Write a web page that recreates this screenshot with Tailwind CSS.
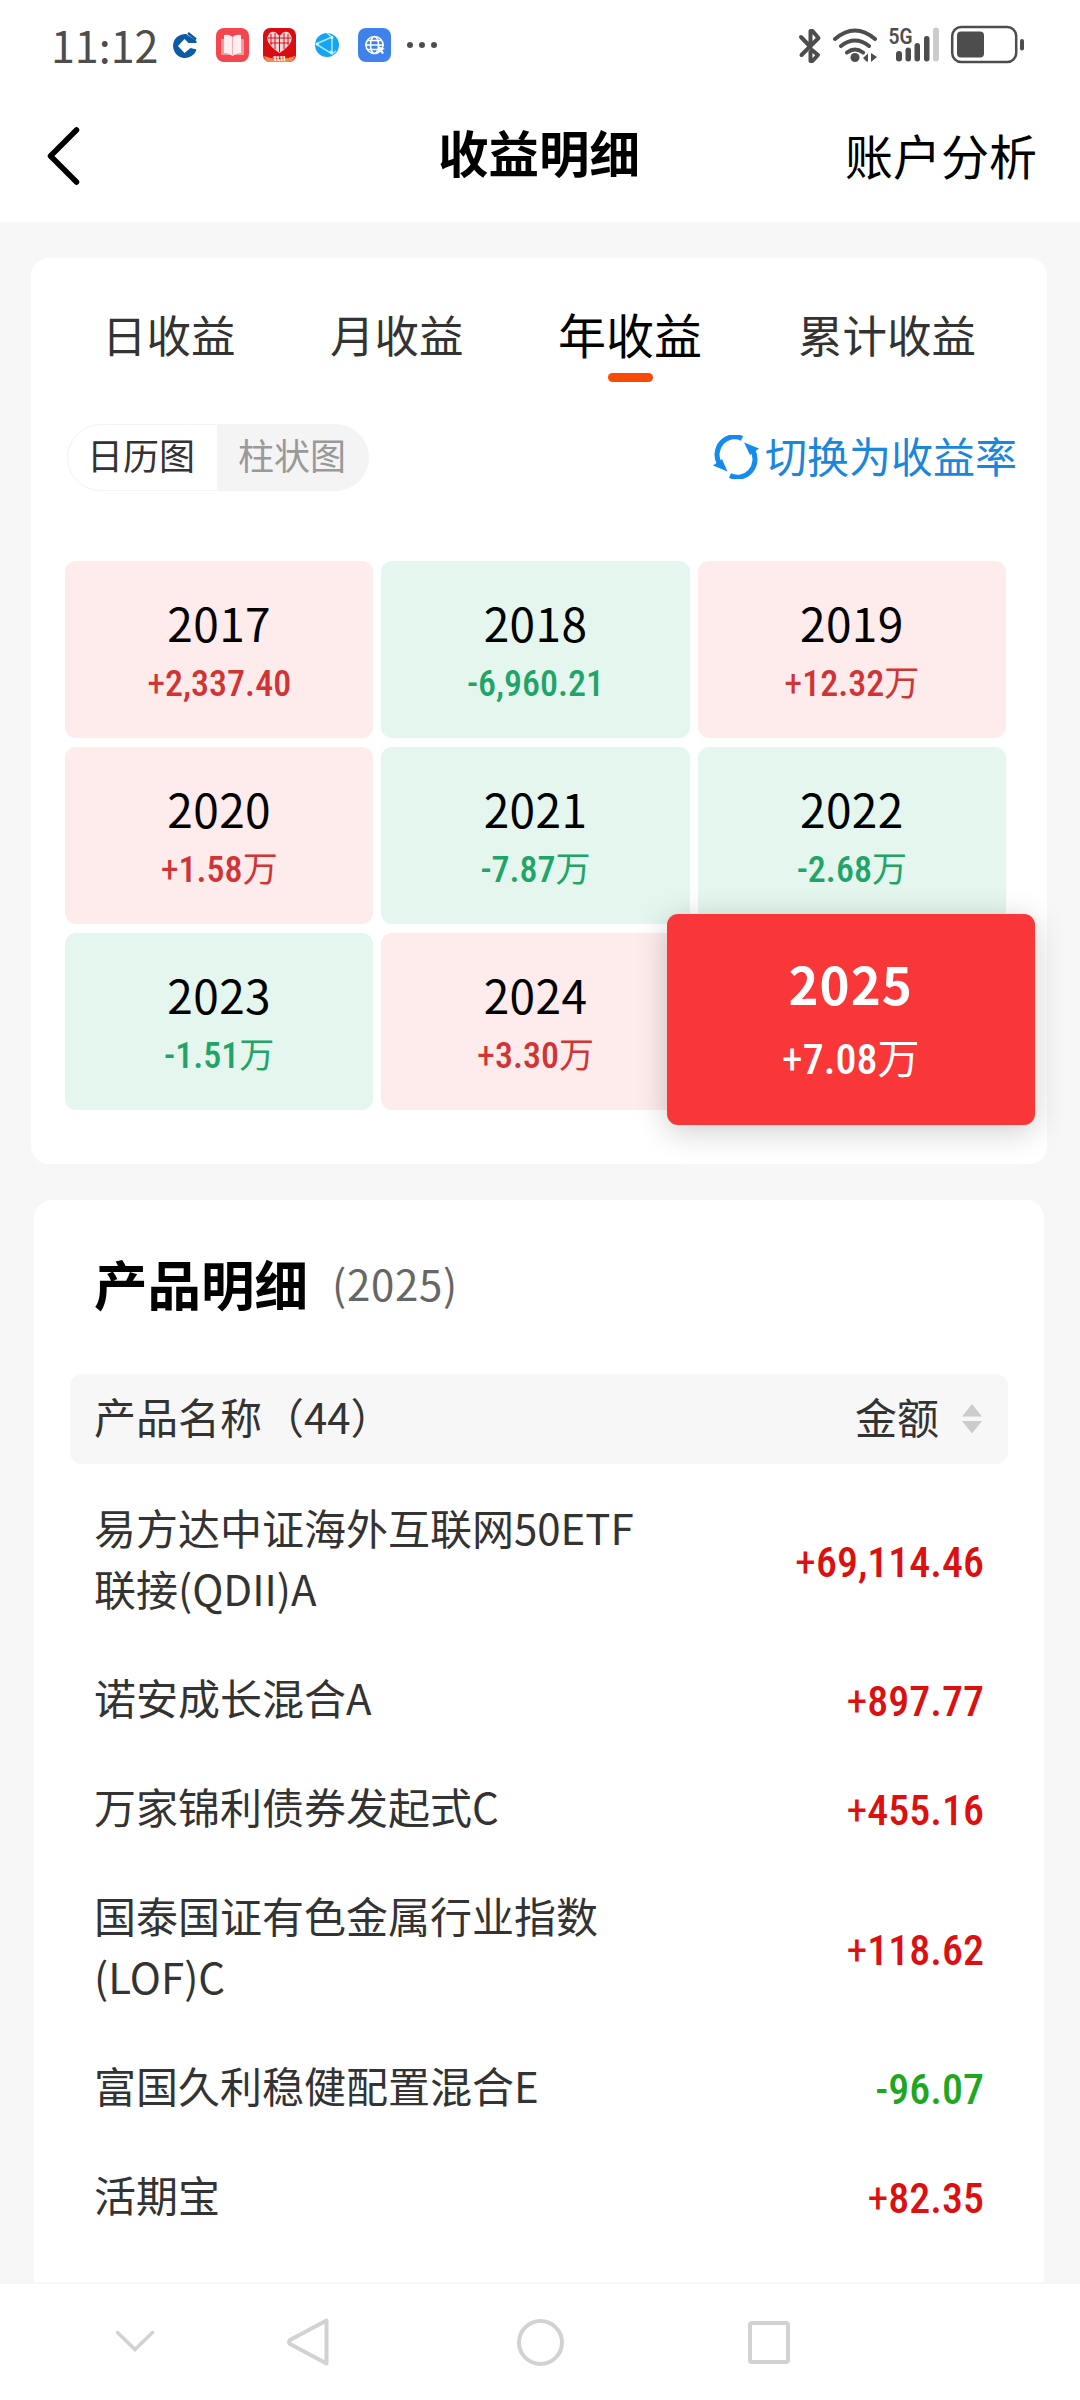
<!DOCTYPE html>
<html lang="zh-CN">
<head>
    <meta charset="UTF-8">
    <meta name="viewport" content="width=device-width, initial-scale=1.0">
    <title>收益明细</title>
    <script src="https://cdn.jsdelivr.net/npm/@tailwindcss/browser@4"></script>
</head>
<body class="bg-[#f7f7f7] w-[1080px] h-[2400px] overflow-hidden flex flex-col text-[#333] font-['Noto_Sans_CJK_SC',sans-serif]">
    <!-- status bar -->
    <div class="h-[90px] bg-white flex items-center justify-between pl-[51px] pr-[56px] text-[#4d4d4d] shrink-0">
        <div class="flex items-center">
            <span class="w-[122px] text-[43px] leading-[60px] whitespace-nowrap -mt-[3px]">11:12</span>
            <svg class="w-[24px] h-[26px]" viewBox="0 0 24 26">
                <path d="M13 2A12 12 0 1 0 23.500 17.500L17.500 16 11.500 21 5 14 11.500 7l4 4h8V9z" fill="#0b5ba5"/>
                <path d="M15 1 23 7.500" stroke="#0b5ba5" stroke-width="2.500"/>
            </svg>
            <svg class="w-[33px] h-[34px] ml-[19px]" viewBox="0 0 33 34">
                <rect width="33" height="34" rx="8" fill="#f5454f"/>
                <path d="M5 11h23v16H5z" fill="#fa9a9e"/>
                <path d="M8 7q5-1 8.500 2Q20 6 25 7v18q-5 0-8.500 3Q13 25 8 25z" fill="#fff0ef"/>
                <path d="M16.500 9v18" stroke="#f9b0b0" stroke-width="1"/>
            </svg>
            <svg class="w-[33px] h-[34px] ml-[14px]" viewBox="0 0 33 34">
                <rect width="33" height="34" rx="7" fill="#d80d14"/>
                <path d="M1 28q15 6 31 0-1 6-7 6H8q-6 0-7-6z" fill="#f58a4c"/>
                <path d="M16.500 25Q3 16 4.500 9 7 2 13 4.500L16.500 8 20 4.500Q26 2 28.500 9 30 16 16.500 25z" fill="#f7d3d3"/>
                <path d="M8 6v11M12 5v16M16.500 8v16M21 5v16M25 6v11M5 10h23M7 15h19" stroke="#d80d14" stroke-width="1"/>
                <text x="16.500" y="32.500" text-anchor="middle" font-family="Roboto" font-size="8" font-weight="900" textLength="14" fill="#fff">11.11</text>
            </svg>
            <svg class="w-[24px] h-[24px] ml-[19px]" viewBox="0 0 24 24">
                <circle cx="12" cy="12" r="12" fill="#17a4f5"/>
                <path d="M1 11 17 4v17zM17 4l-5-4M17 21l4-3" fill="none" stroke="#a6ecff" stroke-width="1.500"/>
                <circle cx="17" cy="4.500" r="1.500" fill="#d6f6ff"/><circle cx="2.500" cy="11" r="1.500" fill="#d6f6ff"/><circle cx="16" cy="19" r="1.500" fill="#d6f6ff"/>
            </svg>
            <svg class="w-[33px] h-[34px] ml-[19px]" viewBox="0 0 33 34">
                <rect width="33" height="34" rx="8" fill="#3f82ec"/>
                <g fill="none" stroke="#fff" stroke-width="1.600">
                    <circle cx="16.500" cy="17" r="8.500"/><ellipse cx="16.500" cy="17" rx="4" ry="8.500"/>
                    <path d="M7 17h19M9 12.500h15M9 21.500h12"/>
                </g>
                <path d="m20 18 7 3-3 1 2 3-2 1-2-3-2 2z" fill="#fff"/>
            </svg>
            <span class="ml-[16px] flex gap-[6px]">
                <i class="size-[6px] rounded-full bg-[#4d4d4d]"></i>
                <i class="size-[6px] rounded-full bg-[#4d4d4d]"></i>
                <i class="size-[6px] rounded-full bg-[#4d4d4d]"></i>
            </span>
        </div>
        <!-- bluetooth, wifi, signal, battery -->
        <svg class="w-[226px] h-[40px]" viewBox="798 25 226 40">
            <g fill="none" stroke="#4d4d4d" stroke-width="4" stroke-linecap="round" stroke-linejoin="round">
                <path d="m801 37 9.500 10V31h2l6 7-17 17M812 50l6 5-5.500 6h-2v-9"/>
                <path d="M835 39q20-17 40 0M841 46q14-11 28 0M847 52.500q8-6 16 0"/>
            </g>
            <circle cx="855" cy="57.500" r="4.500" fill="#4d4d4d"/>
            <path d="M863 58l5-4.500v8h-1.500zM871 53v9l6-5z" fill="#4d4d4d"/>
            <text x="888.500" y="43.500" font-family="Roboto" font-size="21.500" font-weight="600" textLength="24" lengthAdjust="spacingAndGlyphs" fill="#4d4d4d">5G</text>
            <g fill="#4d4d4d">
                <rect x="896" y="51" width="6" height="10.500" rx="3"/>
                <rect x="905.500" y="47.500" width="5.500" height="14" rx="2.700"/>
                <rect x="914.500" y="43" width="5.500" height="18.500" rx="2.700"/>
                <rect x="924" y="36" width="5.500" height="25.500" rx="2.700"/>
                <rect x="933" y="27.500" width="6" height="34" rx="3" fill="#cbcbcb"/>
                <rect x="957" y="31.500" width="27" height="26" rx="4"/>
                <rect x="1020" y="39" width="4" height="11.500" rx="2"/>
            </g>
            <rect x="952.200" y="27" width="64" height="35" rx="9" fill="none" stroke="#4d4d4d" stroke-width="2.500"/>
        </svg>
    </div>

    <!-- title bar -->
    <header class="h-[132px] bg-white grid grid-cols-3 items-center pl-[45px] pr-[43px] text-black shrink-0">
        <svg class="w-[38px] h-[60px]" viewBox="0 0 38 60"><path d="M31.500 4 5.500 30 31.500 56" fill="none" stroke="#000" stroke-width="5.500" stroke-linecap="round" stroke-linejoin="round"/></svg>
        <h1 class="text-[50.5px] leading-[60px] font-bold text-center -mt-[10px] -ml-[4px]">收益明细</h1>
        <a class="text-[48px] leading-[60px] text-right -mt-[5px]">账户分析</a>
    </header>

    <!-- yearly calendar -->
    <section class="mt-[36px] ml-[31px] mr-[33px] h-[906px] bg-white rounded-[18px] shrink-0">
        <nav class="flex pt-[44px] pl-[71px] text-[44.5px] leading-[64px] whitespace-nowrap">
            <a class="w-[228px]">日收益</a>
            <a class="w-[228px]">月收益</a>
            <a class="w-[144px] text-[48px] text-black flex flex-col items-center"><span class="-mt-[1px] mb-[1px]">年收益</span><i class="w-[45px] h-[9px] mt-[7px] rounded-full bg-[#fa4a08]"></i></a>
            <a class="ml-[96px]">累计收益</a>
        </nav>
        <div class="mt-[42px] ml-[36px] mr-[30px] flex justify-between items-center">
            <div class="flex w-[302px] h-[67px] rounded-full bg-[#f4f4f4] border border-[#f4f4f4] overflow-hidden text-[36px] leading-[59px]">
                <span class="w-[149px] bg-white text-center rounded-l-full -indent-[3px] pb-[6px]">日历图</span>
                <span class="w-[151px] pl-[21px] text-[#999]">柱状图</span>
            </div>
            <a class="flex items-center text-[42px] leading-[60px] text-[#1a86dc] -mt-[6px]">
                <svg class="w-[46px] h-[44px] mr-[6px] mt-[4px]" viewBox="0 0 46 44">
                    <path d="M29 3.500A17.500 18 0 0 0 6.500 29M17 40.500A17.500 18 0 0 0 39.500 15" fill="none" stroke="#148bee" stroke-width="5"/>
                    <path d="M31 7.500 46 13.500 37 20zM0 30.500 9 24 14.500 36.500z" fill="#148bee"/>
                </svg>
                切换为收益率
            </a>
        </div>
        <div class="mt-[70px] ml-[34px] w-[941px] grid grid-cols-3 gap-x-[8px] gap-y-[9px] text-center">
            <div class="h-[177px] rounded-[11px] pt-[31px] bg-[#feebeb] text-[#d03434]">
                <p class="text-[46px] leading-[60px] tracking-[0.4px] text-black">2017</p>
                <p class="text-[36px] leading-[64px] font-['Roboto_Condensed','Noto_Sans_CJK_SC',sans-serif] font-medium"><span class="font-normal">+</span>2,337.40</p>
            </div>
            <div class="h-[177px] rounded-[11px] pt-[31px] bg-[#e5f6ee] text-[#1ea567]">
                <p class="text-[46px] leading-[60px] tracking-[0.4px] text-black">2018</p>
                <p class="text-[36px] leading-[64px] font-['Roboto_Condensed','Noto_Sans_CJK_SC',sans-serif] font-medium">-6,960.21</p>
            </div>
            <div class="h-[177px] rounded-[11px] pt-[31px] bg-[#feebeb] text-[#d03434]">
                <p class="text-[46px] leading-[60px] tracking-[0.4px] text-black">2019</p>
                <p class="text-[36px] leading-[64px] font-['Roboto_Condensed','Noto_Sans_CJK_SC',sans-serif] font-medium"><span class="font-normal">+</span>12.32<span class="font-normal text-[35px]">万</span></p>
            </div>
            <div class="h-[177px] rounded-[11px] pt-[31px] bg-[#feebeb] text-[#d03434]">
                <p class="text-[46px] leading-[60px] tracking-[0.4px] text-black">2020</p>
                <p class="text-[36px] leading-[64px] font-['Roboto_Condensed','Noto_Sans_CJK_SC',sans-serif] font-medium"><span class="font-normal">+</span>1.58<span class="font-normal text-[35px]">万</span></p>
            </div>
            <div class="h-[177px] rounded-[11px] pt-[31px] bg-[#e5f6ee] text-[#1ea567]">
                <p class="text-[46px] leading-[60px] tracking-[0.4px] text-black">2021</p>
                <p class="text-[36px] leading-[64px] font-['Roboto_Condensed','Noto_Sans_CJK_SC',sans-serif] font-medium">-7.87<span class="font-normal text-[35px]">万</span></p>
            </div>
            <div class="h-[177px] rounded-[11px] pt-[31px] bg-[#e5f6ee] text-[#1ea567]">
                <p class="text-[46px] leading-[60px] tracking-[0.4px] text-black">2022</p>
                <p class="text-[36px] leading-[64px] font-['Roboto_Condensed','Noto_Sans_CJK_SC',sans-serif] font-medium">-2.68<span class="font-normal text-[35px]">万</span></p>
            </div>
            <div class="h-[177px] rounded-[11px] pt-[31px] bg-[#e5f6ee] text-[#1ea567]">
                <p class="text-[46px] leading-[60px] tracking-[0.4px] text-black">2023</p>
                <p class="text-[36px] leading-[64px] font-['Roboto_Condensed','Noto_Sans_CJK_SC',sans-serif] font-medium">-1.51<span class="font-normal text-[35px]">万</span></p>
            </div>
            <div class="h-[177px] rounded-[11px] pt-[31px] bg-[#feebeb] text-[#d03434]">
                <p class="text-[46px] leading-[60px] tracking-[0.4px] text-black">2024</p>
                <p class="text-[36px] leading-[64px] font-['Roboto_Condensed','Noto_Sans_CJK_SC',sans-serif] font-medium"><span class="font-normal">+</span>3.30<span class="font-normal text-[35px]">万</span></p>
            </div>
            <!-- selected year, enlarged over its neighbours -->
            <div class="h-[177px] relative">
                <div class="absolute -left-[31px] -top-[19px] w-[368px] h-[211px] rounded-[11px] bg-[#f93739] text-white shadow-[0_6px_32px_rgba(0,0,0,0.2)] pt-[36px]">
                    <p class="text-[51px] leading-[66px] tracking-[1px] font-bold">2025</p>
                    <p class="text-[42px] leading-[88px] font-['Roboto_Condensed','Noto_Sans_CJK_SC',sans-serif] font-medium"><span class="font-normal">+</span>7.08<span class="font-normal">万</span></p>
                </div>
            </div>
        </div>
    </section>

    <!-- product list -->
    <section class="mt-[36px] ml-[34px] mr-[36px] mb-[2px] h-[1082px] px-[36px] bg-white rounded-t-[18px] shrink-0">
        <h2 class="h-[174px] pt-[41px] pl-[24px] flex text-[53.5px] leading-[84px] font-bold text-black">产品明细<span class="ml-[24px] text-[42px] font-normal text-[#666] tracking-[0.7px]">(2025)</span></h2>
        <div class="h-[90px] rounded-[12px] bg-[#f7f7f7] flex items-center pl-[24px] pr-[26px] text-[42px] leading-[60px]">
            <span class="flex-1 -mt-[6px]">产品名称（44）</span>
            <span class="-mt-[6px]">金额</span>
            <svg class="w-[20px] h-[30px] ml-[23px]" viewBox="0 0 20 30"><path d="M10 0l10 12.500H0zM0 17h20L10 29.500z" fill="#ccc"/></svg>
        </div>
        <ul class="pt-[11px] pl-[24px] pr-[24px] text-[42px] leading-[61px]">
            <li class="py-[24px] flex justify-between items-center">
                <span class="-mt-[3px] mb-[3px]">易方达中证海外互联网50ETF<br>联接(QDII)A</span>
                <b class="font-['Roboto_Condensed'] font-medium text-[#dd0f0f] mt-[2px] -mb-[2px]"><span class="font-normal">+</span>69,114.46</b>
            </li>
            <li class="py-[24px] flex justify-between items-center">
                <span class="-mt-[3px] mb-[3px]">诺安成长混合A</span>
                <b class="font-['Roboto_Condensed'] font-medium text-[#dd0f0f] mt-[2px] -mb-[2px]"><span class="font-normal">+</span>897.77</b>
            </li>
            <li class="py-[24px] flex justify-between items-center">
                <span class="-mt-[3px] mb-[3px]">万家锦利债券发起式C</span>
                <b class="font-['Roboto_Condensed'] font-medium text-[#dd0f0f] mt-[2px] -mb-[2px]"><span class="font-normal">+</span>455.16</b>
            </li>
            <li class="py-[24px] flex justify-between items-center">
                <span class="-mt-[3px] mb-[3px]">国泰国证有色金属行业指数<br>(LOF)C</span>
                <b class="font-['Roboto_Condensed'] font-medium text-[#dd0f0f] mt-[2px] -mb-[2px]"><span class="font-normal">+</span>118.62</b>
            </li>
            <li class="py-[24px] flex justify-between items-center">
                <span class="-mt-[3px] mb-[3px]">富国久利稳健配置混合E</span>
                <b class="font-['Roboto_Condensed'] font-medium text-[#1fa81f] mt-[2px] -mb-[2px]">-96.07</b>
            </li>
            <li class="py-[24px] flex justify-between items-center">
                <span class="-mt-[3px] mb-[3px]">活期宝</span>
                <b class="font-['Roboto_Condensed'] font-medium text-[#dd0f0f] mt-[2px] -mb-[2px]"><span class="font-normal">+</span>82.35</b>
            </li>
        </ul>
    </section>

    <!-- system navigation -->
    <footer class="h-[116px] bg-white flex items-center pl-[114px] shrink-0">
        <svg class="w-[42px] h-[26px]" viewBox="0 0 42 26"><path d="M3.500 3.500 21 20.500 38.500 3.500" fill="none" stroke="#d2d2d2" stroke-width="3.500" stroke-linecap="round"/></svg>
        <svg class="w-[44px] h-[50px] ml-[131px]" viewBox="0 0 44 50"><path d="M39.500 3.500v43L3 27q-2-2 0-4z" fill="none" stroke="#d2d2d2" stroke-width="4" stroke-linejoin="round"/></svg>
        <i class="size-[47px] ml-[186px] rounded-full border-4 border-[#d2d2d2]"></i>
        <i class="w-[42px] h-[43px] ml-[184px] rounded-[4px] border-4 border-[#d2d2d2]"></i>
    </footer>
</body>
</html>
